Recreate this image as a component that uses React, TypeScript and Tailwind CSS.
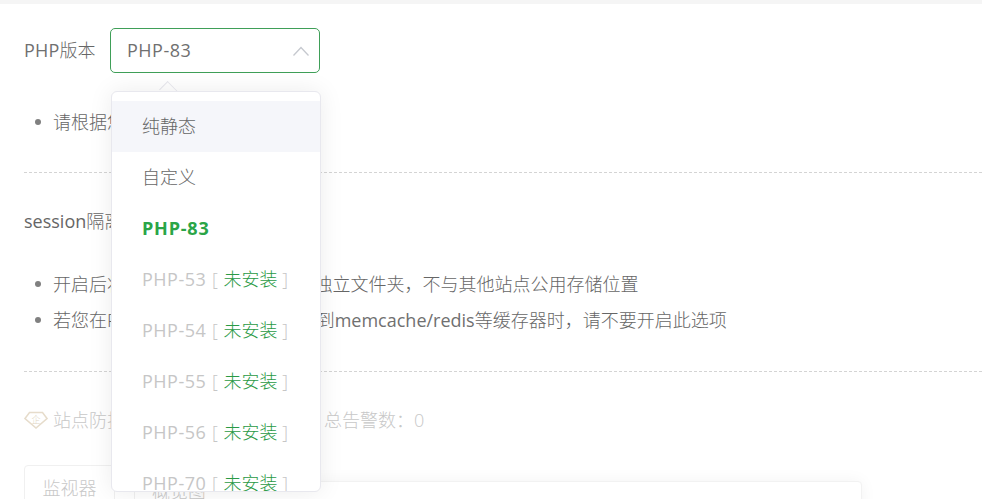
const font = { fontFamily: '"Open Sans", "Noto Sans CJK SC", sans-serif' };

const missing = ['PHP-53', 'PHP-54', 'PHP-55', 'PHP-56', 'PHP-70'];

function Bullet() {
  return <span className="ml-[11px] mr-[12px] h-[6px] w-[6px] rounded-full bg-[#808080]" />;
}

function Dropdown() {
  return (
    <div className="absolute left-[1px] top-[63px] z-20 w-[210px]">
      <div className="absolute left-[50px] top-[-8px] h-[16px] w-[16px] rotate-45 scale-y-75 border-l border-t border-[#e8e8ee] bg-white" />
      <div className="relative h-[401px] overflow-hidden rounded-[6px] border border-[#e8e8ee] bg-white py-[9px] text-[18px] leading-[51px] shadow-[0_0_24px_rgba(0,0,0,0.08)]">
        <div className="h-[51px] bg-[#f5f6fa] pl-[30px] text-[#666]">纯静态</div>
        <div className="h-[51px] pl-[30px] text-[#666]">自定义</div>
        <div className="h-[51px] pl-[30px] font-bold tracking-[0.8px] text-[#2aa547]">PHP-83</div>
        {missing.map((name) => (
          <div key={name} className="h-[51px] whitespace-nowrap pl-[30px] text-[#c6c6c6]">
            <span className="font-normal tracking-[0.5px]">{name}</span> <span className="mx-[1px]">[</span>{' '}
            <span className="text-[#2a9a45]">未安装</span> <span>]</span>
          </div>
        ))}
      </div>
    </div>
  );
}

export default function App() {
  return (
    <div className="h-[499px] w-[982px] overflow-hidden bg-white text-[18px] font-light text-[#666]" style={font}>
      <div className="h-[4px] bg-[#f5f5f5]" />
      <div className="px-[24px] pt-[24px]">
        <div className="flex items-center">
          <span className="w-[86px]">
            <span className="font-normal tracking-[0.2px] text-[#707070]">PHP</span>版本
          </span>
          <div className="relative">
            <div className="flex h-[45px] w-[210px] items-center justify-between rounded-[5px] border border-[#3f9f58] pl-[16px] pr-[10px]">
              <span className="font-normal tracking-[0.5px] text-[#707070]">PHP-83</span>
              <svg width="16" height="10" viewBox="0 0 16 10" fill="none" stroke="#c6c9cf" strokeWidth="1.3">
                <path d="M0.5 9.5 8 1.5l7.5 8" />
              </svg>
            </div>
            <Dropdown />
          </div>
        </div>

        <ul className="mt-[29px] pb-[30px]">
          <li className="flex h-[40px] items-center whitespace-nowrap">
            <Bullet />
            请根据您的程序需求选择版本
          </li>
        </ul>

        <div className="-mr-[24px] border-t border-dashed border-[#d4d4d4]" />

        <div className="mt-[31px] h-[34px] leading-[34px]">
          <span className="font-normal text-[#666]">session</span>隔离
        </div>

        <ul className="mt-[28px]">
          <li className="flex h-[36px] items-center whitespace-nowrap">
            <Bullet />
            <span>
              开启后将会把<span className="tracking-[0.45px]">session</span>文件存放到独立文件夹，不与其他站点公用存储位置
            </span>
          </li>
          <li className="flex h-[36px] items-center whitespace-nowrap">
            <Bullet />
            <span>
              若您在PHP配置中将<span className="tracking-[1.05px]">session</span>保存到
              <span className="font-normal text-[#707070]">memcache/redis</span>等缓存器时，请不要开启此选项
            </span>
          </li>
        </ul>

        <div className="-mr-[24px] mt-[33px] border-t border-dashed border-[#d4d4d4]" />

        <div className="mt-[31px] flex h-[34px] items-center whitespace-nowrap text-[#c8c8c8]">
          <svg width="24" height="18" viewBox="0 0 24 18" fill="none" stroke="#e6dccb" strokeWidth="1.5" className="mr-[5px]">
            <path d="M5.5 1.5h13L23 7.5 12 17 1 7.5z" />
            <text x="12" y="11.5" fontSize="9" textAnchor="middle" fill="#e0d6c3" stroke="none">
              企
            </text>
          </svg>
          <span className="w-[271px]">站点防护已开启</span>
          <span>总告警数：0</span>
        </div>

        <div className="mt-[28px] flex items-start">
          <div className="flex h-[46px] w-[91px] items-center justify-center rounded-t-[4px] border border-[#f0f0f0] text-[#c8c8c8]">
            监视器
          </div>
          <div className="ml-[19px] flex h-[46px] w-[70px] items-center whitespace-nowrap border-l border-[#f0f0f0] pl-[17px] pt-[6px] text-[#c8c8c8]">
            概览图
          </div>
          <div className="mt-[16px] h-[40px] w-[658px] rounded-t-[4px] border border-[#f2f2f2] bg-white shadow-[0_0_16px_rgba(0,0,0,0.05)]" />
        </div>
      </div>
    </div>
  );
}
